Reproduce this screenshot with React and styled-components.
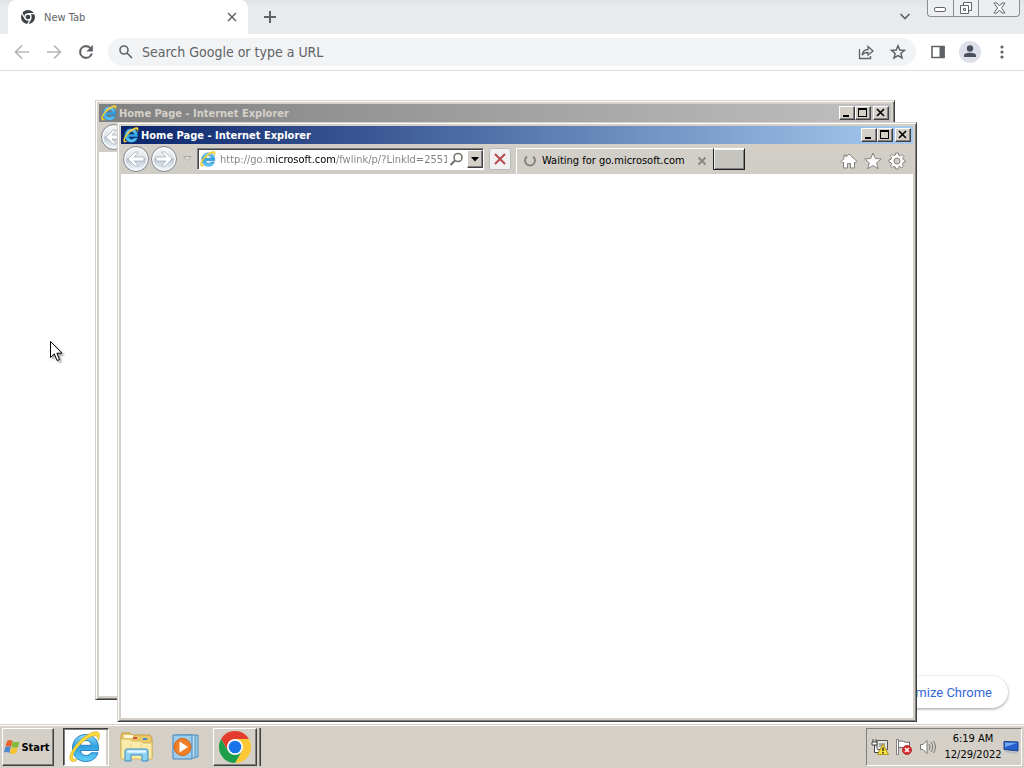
import React from "react";
import styled, { createGlobalStyle, css } from "styled-components";

const GlobalStyle = createGlobalStyle`
  *, *::before, *::after { box-sizing: border-box; }
  html, body { margin: 0; height: 100%; overflow: hidden; }
  body { font-family: "DejaVu Sans Condensed", "Noto Sans", sans-serif; font-size: 11px; color: #000; background: #fff; }
  button, input { font: inherit; color: inherit; margin: 0; padding: 0; border: 0; background: none; }
  button { display: inline-flex; align-items: center; justify-content: center; flex: none; }
  svg { display: block; flex: none; }
`;

const Desktop = styled.div`
  position: relative;
  display: flex;
  flex-direction: column;
  height: 100vh;
  overflow: hidden;
`;

/* ---------- Chrome ---------- */

const ChromeWindow = styled.main`
  flex: 1;
  min-height: 0;
  display: flex;
  flex-direction: column;
  background: #fff;
`;

const TabStrip = styled.header`
  display: flex;
  align-items: flex-start;
  height: 34px;
  padding-left: 8px;
  background: linear-gradient(#e1e3e6, #e8eaed 8px);
`;

const ChromeTab = styled.div`
  display: flex;
  align-items: center;
  width: 240px;
  height: 34px;
  padding: 0 8px 0 12px;
  border-radius: 8px 8px 0 0;
  background: #fff;
  color: #5f6368;
`;

const ChromeTabTitle = styled.span`
  flex: 1;
  padding-left: 8px;
`;

const IconButton = styled.button`
  width: ${(p) => p.$w || 32}px;
  height: ${(p) => p.$h || 32}px;
  color: ${(p) => p.$color || "#5f6368"};
`;

const Spacer = styled.div`
  flex: 1;
`;

const CaptionGroup = styled.div`
  display: flex;
  height: 17px;
  margin: 0 4px 0 6px;
  border: 1px solid #8b8e94;
  border-top: 0;
  border-radius: 0 0 4px 4px;
  background: #eceef1;
`;

const CaptionButton = styled.button`
  width: ${(p) => p.$w}px;
  height: 16px;
  & + & { border-left: 1px solid #8b8e94; }
`;

const Toolbar = styled.div`
  display: flex;
  align-items: center;
  height: 37px;
  padding: 0 6px;
  border-bottom: 1px solid #dadce0;
`;

const Omnibox = styled.label`
  flex: 1;
  display: flex;
  align-items: center;
  height: 28px;
  margin: 0 6px;
  padding: 0 2px 0 10px;
  border-radius: 14px;
  background: #f1f3f4;
  color: #5f6368;
`;

const OmniInput = styled.input`
  flex: 1;
  min-width: 0;
  height: 28px;
  padding-left: 8px;
  font-size: 14px;
  outline: 0;
  &::placeholder { color: #5f6368; opacity: 1; }
`;

const Page = styled.section`
  flex: 1;
  display: flex;
  align-items: flex-end;
  justify-content: flex-end;
  padding: 16px;
`;

const CustomizeButton = styled.button`
  height: 32px;
  padding: 0 16px;
  border-radius: 16px;
  background: #fff;
  color: #3367d6;
  font-family: Roboto, sans-serif;
  font-size: 13px;
  box-shadow: 0 1px 3px rgba(0, 0, 0, 0.4);
`;

/* ---------- Internet Explorer ---------- */

const IEFrame = styled.section`
  position: absolute;
  left: ${(p) => p.$x}px;
  top: ${(p) => p.$y}px;
  width: 800px;
  height: 600px;
  display: flex;
  flex-direction: column;
  padding: 2px;
  border: 1px solid;
  border-color: #d4d0c8 #404040 #404040 #d4d0c8;
  background: #d4d0c8;
  box-shadow: inset 1px 1px #fff, inset -1px -1px #808080;
`;

const TitleBar = styled.header`
  display: flex;
  align-items: center;
  height: 18px;
  margin: 1px 1px 0;
  padding: 0 2px;
  gap: 2px;
  background: ${(p) => (p.$active ? "linear-gradient(90deg, #0a246a, #a6caf0)" : "linear-gradient(90deg, #808080, #c0c0c0)")};
  color: ${(p) => (p.$active ? "#fff" : "#d4d0c8")};
  font-weight: bold;
`;

const TitleText = styled.span`
  flex: 1;
`;

const raised = css`
  border: 1px solid;
  border-color: #fff #404040 #404040 #fff;
  background: #d4d0c8;
  box-shadow: inset -1px -1px #808080;
`;

const TitleButton = styled.button`
  width: 16px;
  height: 14px;
  color: #000;
  ${raised}
`;

const TitleButtons = styled.div`
  display: flex;
  gap: 2px;
  & > :first-child { margin-right: -2px; }
`;

const IEBar = styled.div`
  display: flex;
  align-items: center;
  height: 30px;
  margin: 0 1px;
  padding-left: 1px;
  background: linear-gradient(#d4d0c8, #cfccc6);
`;

const IEContent = styled.div`
  flex: 1;
  margin: 0 1px 1px;
  background: #fff;
`;

const NavButton = styled.button`
  width: 28px;
  height: 28px;
`;

const AddressBox = styled.label`
  display: flex;
  align-items: center;
  width: 287px;
  height: 22px;
  padding-left: 2px;
  border: 1px solid;
  border-color: #808080 #fff #fff #808080;
  box-shadow: inset 1px 1px #404040;
  background: #fff;
`;

const AddressInput = styled.input`
  width: 227px;
  height: 18px;
  margin-left: 4px;
  outline: 0;
  color: transparent;
  background: linear-gradient(90deg, #808080 48px, #000 48px 116px, #808080 116px);
  background-clip: text;
  -webkit-background-clip: text;
`;

const DropButton = styled.button`
  width: 16px;
  height: 18px;
  margin-left: 2px;
  ${raised}
`;

const StopButton = styled.button`
  width: 22px;
  height: 22px;
  margin: 0 5px;
  border: 1px solid #b9b9bd;
  border-radius: 2px;
  background: #f0f0f0;
`;

const IETab = styled.div`
  display: flex;
  align-items: center;
  align-self: flex-end;
  width: 197px;
  height: 26px;
  padding: 0 3px 2px 6px;
  border-top: 1px solid #fff;
  border-left: 1px solid #fff;
  background: #d2cfc8;
`;

const IETabTitle = styled.span`
  flex: 1;
  padding-left: 5px;
  white-space: nowrap;
`;

const NewTabButton = styled.button`
  width: 32px;
  height: 22px;
  border: 1px solid #202020;
  border-top-color: #fff;
  background: #c6c4bf;
  box-shadow: inset 1px 1px #f2f2f0, inset -1px -1px #808080;
`;

const CommandIcons = styled.div`
  display: flex;
  padding: 4px 4px 0 0;
`;

/* ---------- Taskbar ---------- */

const Taskbar = styled.footer`
  display: flex;
  align-items: flex-start;
  height: 44px;
  padding: 3px 2px 0;
  border-top: 1px solid #d4d0c8;
  box-shadow: inset 0 1px #fff;
  background: #d4d0c8;
`;

const StartButton = styled.button`
  width: 52px;
  height: 38px;
  padding-right: 2px;
  font-weight: bold;
  ${raised}
`;

const TaskButton = styled.button`
  width: ${(p) => p.$w || 46}px;
  height: 38px;
  ${(p) => p.$look === "raised" && raised}
  ${(p) =>
    p.$look === "pressed" &&
    css`
      padding-right: 2px;
      border: 1px solid;
      border-color: #404040 #fff #fff #404040;
      background: #fff;
      box-shadow: inset 1px 1px #808080, inset -2px 0 #d4d0c8, inset -3px 0 #fff;
    `}
`;

const StackedTask = styled.div`
  display: flex;
  padding-right: 3px;
  border-right: 1px solid #404040;
  box-shadow: inset -1px 0 #808080;
`;

const TaskList = styled.nav`
  display: flex;
  gap: 4px;
  margin-left: 9px;
`;

const Tray = styled.div`
  display: flex;
  align-items: center;
  height: 38px;
  padding: 0 2px 0 1px;
  border: 1px solid;
  border-color: #808080 #fff #fff #808080;
`;

const Clock = styled.time`
  width: 60px;
  margin-left: 3px;
  text-align: center;
  line-height: 16px;
`;

const Pointer = styled.div`
  position: absolute;
  left: 50px;
  top: 341px;
  filter: drop-shadow(2px 2px 1px rgba(0, 0, 0, 0.35));
`;

/* ---------- Drawings ---------- */

const IELogo = ({ size, id }) => (
  <svg width={size} height={size} viewBox="0 0 32 32" aria-hidden="true">
    <defs>
      <linearGradient id={id} x1="0" y1="0" x2="0" y2="1">
        <stop offset="0" stopColor="#8adcfa" />
        <stop offset=".45" stopColor="#2f9fe0" />
        <stop offset="1" stopColor="#62d0f7" />
      </linearGradient>
    </defs>
    <path
      d="M16.500 3.500C24 3.500 29.500 9 29.500 16.500V19.500H11.500C12 22.700 14 24.500 17 24.500 19.400 24.500 21 23.500 22 21.800H29C27.300 27.200 23 30.500 16.800 30.500 9 30.500 3.500 25 3.500 17.200 3.500 9.200 9 3.500 16.500 3.500ZM11.500 14.300H22.300C22 11.300 20 9.500 17 9.500 14 9.500 12 11.300 11.500 14.300Z"
      fill={`url(#${id})`} stroke="#1b78bd" strokeWidth=".9" fillRule="evenodd"
    />
    <path
      d="M7.500 29.500C2.500 32 -.3 29.500 1.200 24.500 4 15 15 3.500 25 1 30.500 -.3 32 3.500 29 9.500 29.300 5.500 27.500 4 24 5 16.500 7.300 7.800 15.500 4.500 22.500 2.800 26.500 3.500 29 7.500 28Z"
      fill="#fbdc3c" stroke="#d9a514" strokeWidth=".6"
    />
  </svg>
);

const ChromeMono = () => (
  <svg width="16" height="16" viewBox="0 0 16 16" aria-hidden="true">
    <circle cx="8" cy="8" r="7" fill="#3c4043" />
    <circle cx="8" cy="8" r="3" fill="#3c4043" stroke="#fff" strokeWidth="1.300" />
    <path d="M8 4.600H14.600M5.100 9.700 1.800 4M10.900 9.700 7.600 15.400" stroke="#fff" strokeWidth="1.200" />
  </svg>
);

const ChromeColor = () => (
  <svg width="32" height="32" viewBox="0 0 32 32" aria-hidden="true">
    <path d="M2.140 8A16 16 0 0 1 29.860 8H16L9.070 20Z" fill="#e33b2e" />
    <path d="M29.860 8A16 16 0 0 1 16 32L22.930 20 16 8Z" fill="#fcc934" />
    <path d="M16 32A16 16 0 0 1 2.140 8L9.070 20H22.930Z" fill="#1e9e4a" />
    <circle cx="16" cy="16" r="8" fill="#fff" />
    <circle cx="16" cy="16" r="6.300" fill="#1a73e8" />
  </svg>
);

const Stroke = ({ size = 16, w = 2, children }) => (
  <svg width={size} height={size} viewBox="0 0 16 16" fill="none" stroke="currentColor" strokeWidth={w} aria-hidden="true">
    {children}
  </svg>
);

const Reload = () => (
  <svg width="20" height="20" viewBox="0 0 24 24" fill="currentColor" stroke="currentColor" strokeWidth=".6" aria-hidden="true">
    <path d="M17.650 6.350A7.960 7.960 0 0 0 12 4a8 8 0 1 0 7.730 10h-2.080A6 6 0 1 1 12 6c1.660 0 3.140.690 4.220 1.780L13 11h7V4z" />
  </svg>
);

const NavArrow = ({ back, id }) => (
  <svg width="28" height="28" viewBox="0 0 28 28" aria-hidden="true">
    <defs>
      <linearGradient id={id} x1="0" y1="0" x2="0" y2="1">
        <stop offset="0" stopColor="#f6f7f8" />
        <stop offset=".45" stopColor="#dfe3e8" />
        <stop offset=".5" stopColor="#bcc5cf" />
        <stop offset="1" stopColor="#eef6fb" />
      </linearGradient>
    </defs>
    <circle cx="14" cy="14" r="12.500" fill="#eceef0" stroke="#858a90" />
    <circle cx="14" cy="14" r="11" fill={`url(#${id})`} stroke="#fff" />
    <g transform={back ? undefined : "rotate(180 14 14)"}>
      <path d="M6 14 13 7H16.500L12 12H22V16H12L16.500 21H13Z" fill="#fff" stroke="#a9b1ba" strokeWidth=".8" />
    </g>
  </svg>
);

const MinIcon = () => (
  <svg width="10" height="10" viewBox="0 0 10 10" aria-hidden="true"><path d="M1 7H7V9H1Z" /></svg>
);
const MaxIcon = () => (
  <svg width="10" height="10" viewBox="0 0 10 10" aria-hidden="true"><path d="M0 0H9V9H0ZM1 2V8H8V2Z" fillRule="evenodd" /></svg>
);
const CloseIcon = () => (
  <svg width="10" height="10" viewBox="0 0 10 10" aria-hidden="true"><path d="M1 1 8 8M8 1 1 8" stroke="#000" strokeWidth="1.600" /></svg>
);

const Folder = () => (
  <svg width="33" height="30" viewBox="0 0 33 30" aria-hidden="true">
    <path d="M1 4 2 1H10L12 3H30L32 6V26H1Z" fill="#e8c768" stroke="#c79f3d" />
    <path d="M4 3H13V6H4Z" fill="#fff8d8" /><path d="M13 5H17V7H13Z" fill="#c6503c" /><path d="M23 6H27V8H23Z" fill="#3f8bd0" />
    <path d="M1 7H10L12 9H21L23 11H32V27H1Z" fill="#f9eba9" stroke="#d9b95e" />
    <path d="M11 12V18M21 12V18" stroke="#ecd486" />
    <path d="M5 29V19Q5 17 7 17H26Q28 17 28 19V29H22V23H11V29Z" fill="#8cd0f2" stroke="#3f8dc4" />
    <path d="M7 19.500H26" stroke="#e2f6ff" strokeWidth="2.500" />
  </svg>
);

const MediaPlayer = () => (
  <svg width="30" height="28" viewBox="0 0 30 28" aria-hidden="true">
    <path d="M8 3 27 2V24L8 25Z" fill="#9cc9e8" stroke="#4d8fbd" />
    <path d="M5 2 24 2V25L5 25Z" fill="#bfdff2" stroke="#4d8fbd" />
    <path d="M2 2H21V26H2Z" fill="#9dccec" stroke="#4287bc" />
    <circle cx="11.500" cy="14" r="8.500" fill="#f08027" stroke="#d3620e" />
    <path d="M8.500 8.500 17 14 8.500 19.500Z" fill="#fff" />
  </svg>
);

const WindowsFlag = () => (
  <svg width="17" height="16" viewBox="0 0 17 16" aria-hidden="true">
    <path d="M3 2Q6 0 8.500 2L7 7.800Q4.500 6.500 1.500 7.800Z" fill="#e5632a" />
    <path d="M8.800 2.300Q12 4 15.500 2.300L14 8Q11 9.700 7.400 8Z" fill="#83ba3b" />
    <path d="M1.300 8.200Q4.200 7 6.800 8.200L5.300 14Q3 12.500 0 13.500Z" fill="#4a8ad0" />
    <path d="M7.300 8.500Q10.500 10.200 13.800 8.500L12.300 14Q9 15.800 5.800 14.300Z" fill="#f6c22e" />
  </svg>
);

const NetworkIcon = () => (
  <svg width="18" height="18" viewBox="0 0 18 18" aria-hidden="true">
    <path d="M6 2.500H16.500V11.500H6Z" fill="#e6e6e0" stroke="#555" />
    <path d="M8 5H14V9H8Z" fill="#aaa" />
    <path d="M2 1V4M5 1V4M1 4H6V7H1ZM3.500 7V14.500H8" fill="#fff" stroke="#444" />
    <path d="M12 6 17.500 16.500H6.500Z" fill="#fbe13c" stroke="#9b8410" strokeWidth=".8" />
    <path d="M12 9.500V13M12 14V15.500" stroke="#222" strokeWidth="1.400" />
  </svg>
);

const FlagIcon = () => (
  <svg width="18" height="18" viewBox="0 0 18 18" aria-hidden="true">
    <path d="M3.500 3.500Q6 2 8.500 3.500T14.500 4V10Q11 11.500 8.500 10T3.500 10Z" fill="#fff" stroke="#666" />
    <path d="M1.500 1.500H3.500V16.500H1.500Z" fill="#fff" stroke="#666" strokeWidth=".8" />
    <circle cx="12" cy="12" r="4.500" fill="#d82c2c" stroke="#a31616" strokeWidth=".7" />
    <path d="M10 10 14 14M14 10 10 14" stroke="#fff" strokeWidth="1.500" />
  </svg>
);

const SpeakerIcon = () => (
  <svg width="18" height="18" viewBox="0 0 18 18" fill="none" aria-hidden="true">
    <path d="M1.500 6.500H4L8 2.500V15.500L4 11.500H1.500Z" fill="#fff" stroke="#777" />
    <path d="M10 6Q12 9 10 12M12 4Q15.500 9 12 14M14.500 3Q18.500 9 14.500 15" stroke="#777" />
  </svg>
);

const ShowDesktopIcon = () => (
  <svg width="16" height="14" viewBox="0 0 16 14" aria-hidden="true">
    <path d="M1 1.500 15 2V11L1 9.500Z" fill="#2560cc" stroke="#173f8a" />
    <path d="M2 2.500 14 3 2 7Z" fill="#74aaf0" />
    <path d="M2 11.500 14 13" stroke="#b3bac4" strokeWidth="1.500" />
  </svg>
);

const tools = { fill: "#fff", stroke: "#85827c", strokeWidth: 1 };

function IEWindow({ x, y, active, id, children }) {
  return (
    <IEFrame $x={x} $y={y} aria-label="Internet Explorer">
      <TitleBar $active={active}>
        <IELogo size={16} id={id} />
        <TitleText>Home Page - Internet Explorer</TitleText>
        <TitleButtons>
          <TitleButton aria-label="Minimize"><MinIcon /></TitleButton>
          <TitleButton aria-label="Maximize"><MaxIcon /></TitleButton>
          <TitleButton aria-label="Close"><CloseIcon /></TitleButton>
        </TitleButtons>
      </TitleBar>
      <IEBar>
        <NavButton aria-label="Back"><NavArrow back id={`${id}Back`} /></NavButton>
        {children}
      </IEBar>
      <IEContent />
    </IEFrame>
  );
}

export default function App() {
  return (
    <>
      <GlobalStyle />
      <Desktop>
        <ChromeWindow>
          <TabStrip>
            <ChromeTab>
              <ChromeMono />
              <ChromeTabTitle>New Tab</ChromeTabTitle>
              <IconButton $w={16} $h={16} aria-label="Close tab">
                <Stroke w={1.5}><path d="M4 4 12 12M12 4 4 12" /></Stroke>
              </IconButton>
            </ChromeTab>
            <IconButton $w={44} $h={34} aria-label="New tab"><Stroke w={2}><path d="M8 2V14M2 8H14" /></Stroke></IconButton>
            <Spacer />
            <IconButton $w={32} aria-label="Search tabs"><Stroke w={1.7}><path d="M3.500 6 8 10.500 12.500 6" /></Stroke></IconButton>
            <CaptionGroup>
              <CaptionButton $w={25} aria-label="Minimize">
                <svg width="13" height="10" viewBox="0 0 13 10"><rect x=".5" y="4.500" width="11" height="4" rx="1.500" fill="#fff" stroke="#60646c" /></svg>
              </CaptionButton>
              <CaptionButton $w={25} aria-label="Restore">
                <svg width="14" height="14" viewBox="0 0 14 14" fill="#fff" stroke="#60646c"><path d="M4.500 1.500H12.500V9.500H4.500Z" /><path d="M1.500 4.500H9.500V12.500H1.500Z" /><path d="M4.500 7.500H6.500V9.500H4.500Z" /></svg>
              </CaptionButton>
              <CaptionButton $w={41} aria-label="Close">
                <svg width="13" height="12" viewBox="0 0 13 12"><path d="M1 1H4L6.500 4 9 1H12L8.500 6 12 11H9L6.500 8 4 11H1L4.500 6Z" fill="#fff" stroke="#60646c" /></svg>
              </CaptionButton>
            </CaptionGroup>
          </TabStrip>
          <Toolbar>
            <IconButton $color="#b4b6b9" aria-label="Back"><Stroke><path d="M15 8H2M8 1.500 1.500 8 8 14.500" strokeWidth="1.700" /></Stroke></IconButton>
            <IconButton $color="#b4b6b9" aria-label="Forward"><Stroke><path d="M1 8H14M8 1.500 14.500 8 8 14.500" strokeWidth="1.700" /></Stroke></IconButton>
            <IconButton aria-label="Reload"><Reload /></IconButton>
            <Omnibox>
              <Stroke w={1.6}><circle cx="6" cy="6" r="4" /><path d="M9 9 14 14" /></Stroke>
              <OmniInput aria-label="Address and search bar" placeholder="Search Google or type a URL" />
              <IconButton aria-label="Share">
                <Stroke w={1.3}><path d="M1.500 5V14.500H12.500V12M4 11Q5 5.500 10 5.500V2.500L15 7 10 11.200V8.500Q6 8.500 4 11Z" /></Stroke>
              </IconButton>
              <IconButton aria-label="Bookmark this tab">
                <Stroke w={1.5}><path d="M8 1.800 9.800 6 14.400 6.400 10.900 9.400 12 13.900 8 11.500 4 13.900 5.100 9.400 1.600 6.400 6.200 6Z" /></Stroke>
              </IconButton>
            </Omnibox>
            <IconButton aria-label="Side panel">
              <Stroke><path d="M2 2.500H14V13.500H2Z" strokeWidth="1.600" /><path d="M9.500 2H14.500V14H9.500Z" fill="currentColor" stroke="none" /></Stroke>
            </IconButton>
            <IconButton aria-label="Profile">
              <svg width="22" height="22" viewBox="0 0 22 22" fill="#48505e"><circle cx="11" cy="11" r="11" fill="#dde0e8" /><circle cx="11" cy="7.500" r="3.200" /><path d="M5 16V14.500Q5 11.800 11 11.800T17 14.500V16Z" /></svg>
            </IconButton>
            <IconButton aria-label="Menu">
              <svg width="16" height="16" viewBox="0 0 16 16" fill="currentColor"><circle cx="8" cy="3" r="1.600" /><circle cx="8" cy="8" r="1.600" /><circle cx="8" cy="13" r="1.600" /></svg>
            </IconButton>
          </Toolbar>
          <Page>
            <CustomizeButton>Customize Chrome</CustomizeButton>
          </Page>
        </ChromeWindow>

        <Taskbar>
          <StartButton><WindowsFlag />Start</StartButton>
          <TaskList aria-label="Taskbar">
            <TaskButton $look="pressed" aria-label="Internet Explorer"><IELogo size={32} id="ieTask" /></TaskButton>
            <TaskButton aria-label="File Explorer"><Folder /></TaskButton>
            <TaskButton aria-label="Media Player"><MediaPlayer /></TaskButton>
            <StackedTask><TaskButton $look="raised" $w={44} aria-label="Google Chrome"><ChromeColor /></TaskButton></StackedTask>
          </TaskList>
          <Spacer />
          <Tray>
            <IconButton $w={24} $h={24} aria-label="Network"><NetworkIcon /></IconButton>
            <IconButton $w={24} $h={24} aria-label="Action Center"><FlagIcon /></IconButton>
            <IconButton $w={24} $h={24} aria-label="Volume"><SpeakerIcon /></IconButton>
            <Clock>6:19 AM<br />12/29/2022</Clock>
            <IconButton $w={16} $h={24} aria-label="Show desktop"><ShowDesktopIcon /></IconButton>
          </Tray>
        </Taskbar>

        <IEWindow x={95} y={100} id="ieRear" />
        <IEWindow x={117} y={122} id="ieFront" active>
          <NavButton aria-label="Forward"><NavArrow id="ieForward" /></NavButton>
          <IconButton $w={19} $h={22} aria-label="Recent pages">
            <svg width="9" height="6" viewBox="0 0 9 6"><path d="M.5.5H8L4.300 4.500Z" fill="#e4e1d9" stroke="#aaa79f" /></svg>
          </IconButton>
          <AddressBox>
            <IELogo size={16} id="ieAddr" />
            <AddressInput aria-label="Address" defaultValue="http://go.microsoft.com/fwlink/p/?LinkId=255142" />
            <IconButton $w={18} $h={18} aria-label="Search">
              <svg width="14" height="14" viewBox="0 0 14 14" fill="none" stroke="#77746e"><circle cx="9" cy="5.500" r="4" strokeWidth="1.600" /><path d="M6 8.500 1.500 13" strokeWidth="2.200" /></svg>
            </IconButton>
            <DropButton aria-label="Show address list">
              <svg width="8" height="5" viewBox="0 0 8 5"><path d="M0 0H8L4 4.500Z" /></svg>
            </DropButton>
          </AddressBox>
          <StopButton aria-label="Stop">
            <svg width="12" height="12" viewBox="0 0 12 12"><path d="M1 1 11 11M11 1 1 11" stroke="#b84a50" strokeWidth="2" /></svg>
          </StopButton>
          <IETab>
            <svg width="14" height="14" viewBox="0 0 14 14" fill="none"><path d="M4 2.500A5 5 0 1 0 10 2.500" stroke="#85837f" strokeWidth="2" /></svg>
            <IETabTitle>Waiting for go.microsoft.com</IETabTitle>
            <IconButton $w={16} $h={16} $color="#8b8883" aria-label="Close tab"><Stroke w={2}><path d="M4.500 4.500 11.500 11.500M11.500 4.500 4.500 11.500" /></Stroke></IconButton>
          </IETab>
          <NewTabButton aria-label="New tab" />
          <Spacer />
          <CommandIcons>
            <IconButton $w={24} $h={24} aria-label="Home">
              <svg width="18" height="18" viewBox="0 0 18 18"><path d="M9 2 17 9.500 15.500 11 14.500 10V16H10.500V11.500H7.500V16H3.500V10L2.500 11 1 9.500 4 6.700V3H6V4.800Z" {...tools} /></svg>
            </IconButton>
            <IconButton $w={24} $h={24} aria-label="Favorites">
              <svg width="18" height="18" viewBox="0 0 18 18"><path d="M9 1 11.300 6.500 17.200 7 12.700 10.900 14.100 16.700 9 13.600 3.900 16.700 5.300 10.900.8 7 6.700 6.500Z" {...tools} /></svg>
            </IconButton>
            <IconButton $w={24} $h={24} aria-label="Tools">
              <svg width="18" height="18" viewBox="0 0 18 18">
                <path d="M7.700 1H10.300L10.700 3.100 12.400 3.800 14.200 2.600 15.900 4.400 14.600 6.100 15.200 7.600 17 8V10.300L15 10.700 14.300 12.300 15.500 14.100 13.800 15.700 12 14.500 10.500 15.100 10.100 17H7.700L7.300 15 5.800 14.400 4.100 15.600 2.400 13.900 3.600 12.200 2.900 10.600 1 10.200V7.800L3 7.400 3.600 5.800 2.500 4.100 4.200 2.400 5.900 3.600 7.300 3ZM9 6A3 3 0 1 0 9 12 3 3 0 1 0 9 6Z" fillRule="evenodd" {...tools} />
              </svg>
            </IconButton>
          </CommandIcons>
        </IEWindow>

        <Pointer>
          <svg width="13" height="21" viewBox="0 0 13 21" aria-hidden="true">
            <path d="M.5.500V16.500L4.300 12.900 7 19.500 9.500 18.500 6.900 12.200H12Z" fill="#fff" stroke="#000" />
          </svg>
        </Pointer>
      </Desktop>
    </>
  );
}
